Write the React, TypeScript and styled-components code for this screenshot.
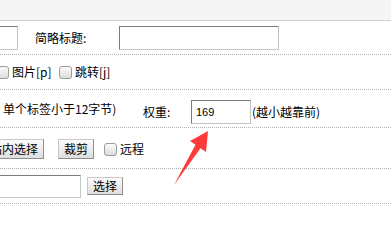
import React from 'react';
import styled, { createGlobalStyle } from 'styled-components';

const Global = createGlobalStyle`
  html, body { margin: 0; padding: 0; background: #fff; }
  body {
    font-family: "Noto Sans CJK SC", "Liberation Sans", sans-serif;
    font-size: 12px;
    color: #000;
  }
`;

const Page = styled.div`
  position: relative;
  width: 391px;
  height: 227px;
  overflow: hidden;
  background: #fff;
`;

const TopBar = styled.div`
  height: 20px;
  background: #f5f5f5;
  border-bottom: 1px solid #d2d2d2;
`;

const Row = styled.div<{ $h: number }>`
  display: flex;
  align-items: center;
  height: ${(p) => p.$h}px;
  border-bottom: 1px dotted #b2b2b2;
  white-space: nowrap;
`;

const Group = styled.div<{ $dy?: number }>`
  display: flex;
  align-items: center;
  margin-top: ${(p) => p.$dy ?? 0}px;
`;

const TextInput = styled.input<{ $w: number; $h?: number; $ml?: number }>`
  box-sizing: border-box;
  flex: none;
  width: ${(p) => p.$w}px;
  height: ${(p) => p.$h ?? 24}px;
  margin: 0 0 0 ${(p) => p.$ml ?? 0}px;
  padding: 0 4px;
  border: 1px solid;
  border-color: #7b7b7b #c6c6c6 #c6c6c6 #7b7b7b;
  font: 11px "Liberation Sans", Arial, sans-serif;
  color: #000;
  background: #fff;
  outline: none;
`;

const Label = styled.span<{ $w?: number; $ml?: number }>`
  display: inline-block;
  flex: none;
  width: ${(p) => (p.$w ? `${p.$w}px` : 'auto')};
  margin-left: ${(p) => p.$ml ?? 0}px;
  line-height: 16px;
`;

const Check = styled.input.attrs({ type: 'checkbox' })<{ $ml?: number }>`
  appearance: none;
  -webkit-appearance: none;
  box-sizing: border-box;
  flex: none;
  width: 13px;
  height: 13px;
  margin: 0 0 0 ${(p) => p.$ml ?? 0}px;
  border: 1px solid #9c9c9c;
  border-radius: 3px;
  background: linear-gradient(#fbfbfb, #dcdcdc);
`;

const Btn = styled.button<{ $h: number; $ml?: number }>`
  box-sizing: border-box;
  flex: none;
  height: ${(p) => p.$h}px;
  margin: 0 0 0 ${(p) => p.$ml ?? 0}px;
  padding: 0 5px;
  font: 12px "Noto Sans CJK SC", sans-serif;
  line-height: 14px;
  color: #000;
  border: 1px solid;
  border-color: #c8c8c8 #8e8e8e #8e8e8e #c8c8c8;
  border-radius: 0;
  background: linear-gradient(#fcfcfc, #dedede);
`;

const Arrow = styled.svg`
  position: absolute;
  left: 170px;
  top: 126px;
  width: 42px;
  height: 62px;
  pointer-events: none;
`;

export default function App() {
  return (
    <>
      <Global />
      <Page>
        <TopBar />
        <Row $h={33}>
          <TextInput $w={118} $ml={-100} />
          <Label $ml={17} $w={84}>简略标题:</Label>
          <TextInput $w={160} />
        </Row>
        <Row $h={34}>
          <Check $ml={-4} />
          <Label $ml={3} $w={41}>图片[p]</Label>
          <Check $ml={6} />
          <Label $ml={3}>跳转[j]</Label>
        </Row>
        <Row $h={37}>
          <Label $ml={3} $w={140}>单个标签小于12字节)</Label>
          <Group $dy={6}>
            <Label $w={48}>权重:</Label>
            <TextInput $w={60} defaultValue="169" />
            <Label $ml={1}>(越小越靠前)</Label>
          </Group>
        </Row>
        <Row $h={40}>
          <Group $dy={2}>
            <Btn $h={20} $ml={-16}>站内选择</Btn>
            <Btn $h={20} $ml={14}>裁剪</Btn>
            <Check $ml={10} />
            <Label $ml={3}>远程</Label>
          </Group>
        </Row>
        <Row $h={34}>
          <TextInput $w={121} $h={23} $ml={-40} />
          <Btn $h={18} $ml={6}>选择</Btn>
        </Row>
        <Arrow viewBox="0 0 42 62">
          <polygon
            points="38,5 36,26 30.5,22.2 4,59 25.5,18.8 20,15"
            fill="#ff3a3a"
          />
        </Arrow>
      </Page>
    </>
  );
}
